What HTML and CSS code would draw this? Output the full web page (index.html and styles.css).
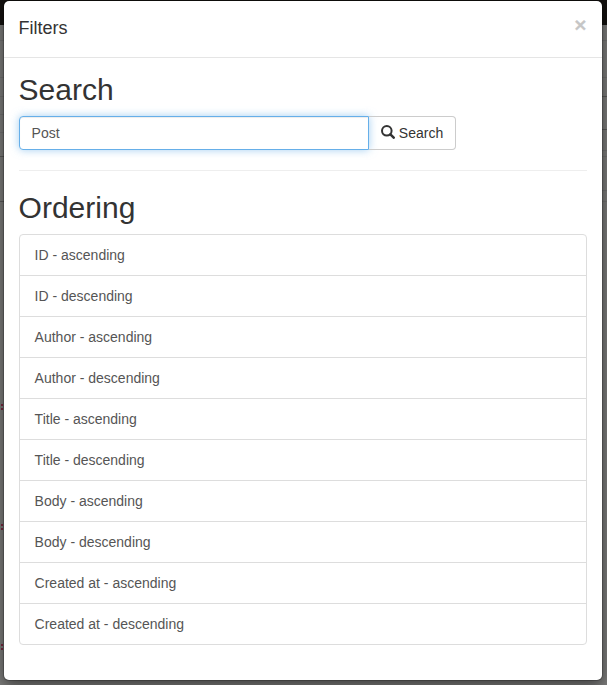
FILE: index.html
```
<!DOCTYPE html>
<html lang="en">
<head>
<meta charset="utf-8">
<title>Filters</title>
<link rel="stylesheet" href="styles.css">
</head>
<body>
<svg class="page-behind" width="607" height="685" viewBox="0 0 607 685" aria-hidden="true">
  <rect width="607" height="25" fill="#141210"/>
  <path d="M0 156.5h5M0 201.5h5M602 96.5h5M602 129.5h5" stroke="#5c5c5c"/>
  <path d="M0 40.5h5M0 77.5h5M0 96.5h5M0 114.5h5M0 132.5h5M602 40.5h5M602 77.5h5M602 150.5h5M602 156.5h5M602 190.5h5M602 201.5h5" stroke="#747474"/>
  <path d="M1 404h2v2h-2zM1 408h2v2h-2zM1 524h2v2h-2zM1 528h2v2h-2zM1 644h2v2h-2zM1 648h2v2h-2z" fill="#7d2942"/>
</svg>
<div class="modal">
  <div class="modal-header">
    <h4>Filters</h4>
    <button class="close" aria-label="Close">×</button>
  </div>
  <div class="modal-body">
    <h2>Search</h2>
    <div class="input-group">
      <input type="text" value="Post" aria-label="Search">
      <button class="btn"><svg width="14" height="14" viewBox="0 0 14 14"><circle cx="5.8" cy="5.8" r="4.8" fill="none" stroke="#333" stroke-width="2"/><path d="M9.4 9.4l3.3 3.3" stroke="#333" stroke-width="2.5" stroke-linecap="round"/></svg> Search</button>
    </div>
    <hr>
    <h2>Ordering</h2>
    <div class="list">
      <a>ID - ascending</a>
      <a>ID - descending</a>
      <a>Author - ascending</a>
      <a>Author - descending</a>
      <a>Title - ascending</a>
      <a>Title - descending</a>
      <a>Body - ascending</a>
      <a>Body - descending</a>
      <a>Created at - ascending</a>
      <a>Created at - descending</a>
    </div>
  </div>
</div>
</body>
</html>
```
FILE: styles.css
```
* { box-sizing: border-box; }
body { margin: 0; height: 685px; overflow: hidden; background: #7f7f7e; color: #333; font: 14px/20px "Liberation Sans", Arial, sans-serif; }
.page-behind { position: absolute; top: 0; left: 0; }
.modal { position: relative; width: 600px; height: 681px; margin-left: 2.6px; background: #fff; border: 1px solid rgba(0,0,0,.2); border-radius: 6px; background-clip: padding-box; box-shadow: 0 5px 15px rgba(0,0,0,.5); }
.modal-header { display: flex; justify-content: space-between; align-items: flex-start; height: 57px; padding: 15px; border-bottom: 1px solid #e5e5e5; }
h4 { margin: 0; font-size: 18px; line-height: 25px; font-weight: 500; }
.close { padding: 0; border: 0; background: none; color: #000; opacity: .22; font: bold 21px/21px "Liberation Sans", Arial, sans-serif; margin-top: -2px; -webkit-text-stroke: .2px #000; }
.modal-body { padding: 15px; }
h2 { margin: 0 0 10px; font-size: 30px; line-height: 33px; font-weight: 500; }
.input-group { display: flex; width: 437px; }
input { width: 350px; height: 34px; padding: 6px 12px; font: inherit; color: #555; border: 1px solid #66afe9; border-radius: 4px 0 0 4px; outline: 0; box-shadow: inset 0 1px 1px rgba(0,0,0,.075), 0 0 8px rgba(102,175,233,.6); }
.btn { width: 87px; height: 34px; padding: 0 0 0 1px; font: inherit; color: #333; background: transparent; border: 1px solid #ccc; border-left: 0; border-radius: 0 4px 4px 0; }
.btn svg { vertical-align: -1px; }
hr { margin: 20px 0; border: 0; border-top: 1px solid #eee; }
.list a { display: block; height: 42px; padding: 10px 15px; margin-bottom: -1px; border: 1px solid #ddd; color: #555; }
.list a:first-child { border-radius: 4px 4px 0 0; }
.list a:last-child { border-radius: 0 0 4px 4px; }
```
